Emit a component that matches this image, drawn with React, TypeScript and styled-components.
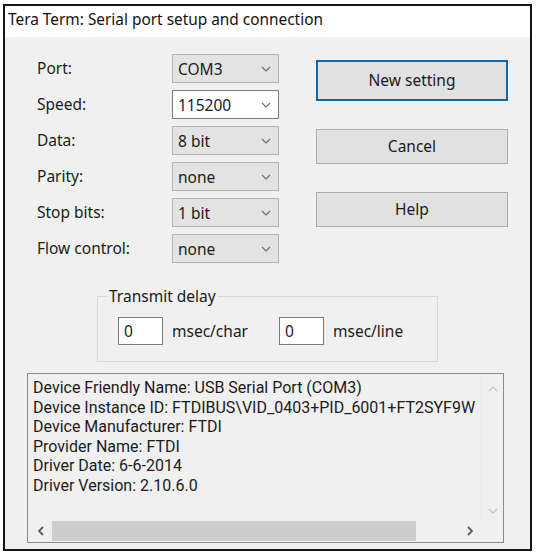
import styled, { createGlobalStyle } from "styled-components";

const Global = createGlobalStyle`
  html, body {
    margin: 0;
    background: #ffffff;
  }
  body {
    font-family: "Noto Sans", "Open Sans", sans-serif;
    color: #1b1b1b;
  }
`;

const Window = styled.div`
  box-sizing: border-box;
  width: 529px;
  height: 547px;
  margin: 4px 0 0 3px;
  border: 2px solid #151515;
  display: flex;
  flex-direction: column;
`;

const TitleBar = styled.div`
  box-sizing: border-box;
  height: 31px;
  background: #ffffff;
  display: flex;
  align-items: center;
  padding: 0 0 5px 3px;
  font-size: 15.4px;
  color: #111;
`;

const Body = styled.div`
  flex: 1;
  background: #f0f0f0;
  display: flex;
  flex-direction: column;
  font-size: 15.5px;
`;

const Top = styled.div`
  display: flex;
  padding: 17px 0 0 32px;
`;

const Form = styled.div`
  display: grid;
  grid-template-columns: 135px 107px;
  grid-auto-rows: 29px;
  row-gap: 7px;
  align-items: center;
`;

const Label = styled.span`
  line-height: 29px;
`;

const Combo = styled.div<{ $editable?: boolean }>`
  box-sizing: border-box;
  height: 29px;
  display: flex;
  align-items: center;
  justify-content: space-between;
  padding: 0 7px 0 5px;
  background: ${(p) => (p.$editable ? "#ffffff" : "#e3e3e3")};
  border: 1px solid ${(p) => (p.$editable ? "#7a7a7a" : "#b4b4b4")};
`;

const Buttons = styled.div`
  display: flex;
  flex-direction: column;
  gap: 28px;
  margin: 6px 0 0 37px;
`;

const Button = styled.div<{ $default?: boolean }>`
  box-sizing: border-box;
  width: 192px;
  height: ${(p) => (p.$default ? "41px" : "35px")};
  display: flex;
  align-items: center;
  justify-content: center;
  padding-bottom: 2px;
  background: #e1e1e1;
  border: ${(p) => (p.$default ? "2px solid #1466a8" : "1px solid #adadad")};
`;

const Group = styled.fieldset`
  box-sizing: border-box;
  width: 341px;
  margin: 23px 0 0 92px;
  padding: 0 0 16px 9px;
  border: 1px solid #dadada;
`;

const Legend = styled.legend`
  padding: 0 2px;
  line-height: 20px;
`;

const DelayRow = styled.div`
  display: flex;
  align-items: center;
  margin: 11px 0 0 11px;
`;

const Field = styled.div`
  box-sizing: border-box;
  width: 45px;
  height: 28px;
  display: flex;
  align-items: center;
  padding-left: 5px;
  background: #ffffff;
  border: 1px solid #7a7a7a;
`;

const Unit = styled.span<{ $gap: number }>`
  margin-left: 9px;
  margin-right: ${(p) => p.$gap}px;
`;

const InfoBox = styled.div`
  box-sizing: border-box;
  width: 477px;
  height: 170px;
  margin: 11px 0 0 22px;
  border: 1px solid #8a8a8a;
  display: grid;
  grid-template-columns: 1fr 22px;
  grid-template-rows: 1fr 22px;
`;

const InfoText = styled.div`
  padding: 4px 0 0 5px;
  font-family: Roboto, "Noto Sans", sans-serif;
  font-size: 16px;
  line-height: 19.6px;
  white-space: nowrap;
  overflow: hidden;
`;

const VScroll = styled.div`
  display: flex;
  flex-direction: column;
  justify-content: space-between;
  align-items: center;
  padding: 12px 0 6px;
  border-left: 1px solid #e8e8e8;
`;

const HScroll = styled.div`
  display: flex;
  align-items: center;
  padding: 0 8px 0 10px;
  gap: 8px;
`;

const Thumb = styled.div`
  flex: 0 0 364px;
  height: 20px;
  background: #cdcdcd;
`;

const Spacer = styled.div`
  flex: 1;
`;

const Chevron = ({ dir, color }: { dir: "up" | "down" | "left" | "right"; color: string }) => {
  const pts = {
    down: "1,1 5,5 9,1",
    up: "1,5 5,1 9,5",
    left: "5,1 1,5 5,9",
    right: "1,1 5,5 1,9",
  }[dir];
  const vertical = dir === "up" || dir === "down";
  return (
    <svg width={vertical ? 10 : 6} height={vertical ? 6 : 10} viewBox={vertical ? "0 0 10 6" : "0 0 6 10"}>
      <polyline points={pts} fill="none" stroke={color} strokeWidth={vertical ? 1.1 : 1.8} />
    </svg>
  );
};

const fields: [string, string, boolean?][] = [
  ["Port:", "COM3"],
  ["Speed:", "115200", true],
  ["Data:", "8 bit"],
  ["Parity:", "none"],
  ["Stop bits:", "1 bit"],
  ["Flow control:", "none"],
];

const info = [
  "Device Friendly Name: USB Serial Port (COM3)",
  "Device Instance ID: FTDIBUS\\VID_0403+PID_6001+FT2SYF9W",
  "Device Manufacturer: FTDI",
  "Provider Name: FTDI",
  "Driver Date: 6-6-2014",
  "Driver Version: 2.10.6.0",
];

export default function App() {
  return (
    <>
      <Global />
      <Window>
        <TitleBar>Tera Term: Serial port setup and connection</TitleBar>
        <Body>
          <Top>
            <Form>
              {fields.map(([label, value, editable]) => [
                <Label key={label}>{label}</Label>,
                <Combo key={label + "-combo"} $editable={editable}>
                  {value}
                  <Chevron dir="down" color="#6b6b6b" />
                </Combo>,
              ])}
            </Form>
            <Buttons>
              <Button $default>New setting</Button>
              <Button>Cancel</Button>
              <Button>Help</Button>
            </Buttons>
          </Top>
          <Group>
            <Legend>Transmit delay</Legend>
            <DelayRow>
              <Field>0</Field>
              <Unit $gap={31}>msec/char</Unit>
              <Field>0</Field>
              <Unit $gap={0}>msec/line</Unit>
            </DelayRow>
          </Group>
          <InfoBox>
            <InfoText>
              {info.map((line) => (
                <div key={line}>{line}</div>
              ))}
            </InfoText>
            <VScroll>
              <Chevron dir="up" color="#c2c2c2" />
              <Chevron dir="down" color="#c2c2c2" />
            </VScroll>
            <HScroll>
              <Chevron dir="left" color="#5a5a5a" />
              <Thumb />
              <Spacer />
              <Chevron dir="right" color="#5a5a5a" />
            </HScroll>
            <div />
          </InfoBox>
        </Body>
      </Window>
    </>
  );
}
